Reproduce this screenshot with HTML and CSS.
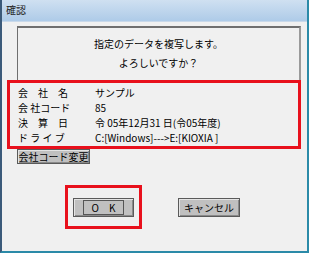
FILE: index.html
```html
<!DOCTYPE html>
<html lang="ja">
<head>
    <meta charset="UTF-8">
    <title>確認</title>
    <link rel="stylesheet" href="styles.css">
</head>
<body>
    <div class="window">
        <div class="titlebar">確認</div>
        <div class="content">
            <div class="message">
                <p>指定のデータを複写します。</p>
                <p>よろしいですか？</p>
            </div>
            <div class="info mark">
                <div class="row"><span class="label">会　社　名</span><span>サンプル</span></div>
                <div class="row"><span class="label">会 社コード</span><span>85</span></div>
                <div class="row"><span class="label">決　算　日</span><span>令 05年12月31 日(令05年度)</span></div>
                <div class="row"><span class="label">ド ラ イ ブ</span><span>C:[Windows]--->E:[KIOXIA ]</span></div>
            </div>
            <button class="btn change">会社コード変更</button>
            <div class="actions">
                <div class="mark ok-wrap">
                    <button class="btn ok"><span>O　K</span></button>
                </div>
                <button class="btn cancel">キャンセル</button>
            </div>
        </div>
    </div>
</body>
</html>
```
FILE: styles.css
```css
body {
    margin: 0;
    font-family: "Noto Sans CJK JP", "Liberation Sans", sans-serif;
    font-size: 10px;
    color: #000;
    background: #f0f0f0;
}
.window {
    width: 309px;
    height: 253px;
    box-sizing: border-box;
    border-left: 2px solid #3b5a7a;
    border-right: 2px solid #2b8aa8;
    border-bottom: 2px solid #2b8aa8;
    background: #f0f0f0;
    display: flex;
    flex-direction: column;
}
.titlebar {
    height: 21px;
    line-height: 20px;
    padding-left: 4px;
    font-size: 10px;
    color: #222;
    background: linear-gradient(#cfe0f1, #aecbe8);
    border-bottom: 1px solid #c9d9ea;
}
.content {
    padding: 4px 0 0 0;
}
.message {
    margin: 0 6px 0 15px;
    height: 56px;
    border-top: 2px solid #6f6f6f;
    border-left: 1px solid #6f6f6f;
    border-right: 2px solid #9a9a9a;
    text-align: center;
    padding-top: 9px;
    box-sizing: border-box;
}
.message p {
    margin: 0 0 6px 0;
    line-height: 13px;
}
.mark {
    border: 3px solid #e8101c;
}
.info {
    margin: -2px 6px 0 5px;
    padding: 2px 0 1px 8px;
}
.row {
    display: flex;
    line-height: 15px;
    white-space: nowrap;
}
.label {
    width: 77px;
}
.btn {
    font-family: inherit;
    font-size: 10px;
    background: #c0c0c0;
    border: 1px solid #5a5a5a;
    box-shadow: inset 1px 1px 0 #e4e4e4, inset -1px -1px 0 #8a8a8a;
    padding: 0;
    color: #000;
    white-space: nowrap;
}
.change {
    margin: 0 0 0 15px;
    width: 73px;
    height: 15px;
    line-height: 13px;
    display: block;
}
.actions {
    display: flex;
    align-items: center;
    margin-top: 21px;
    padding-left: 63px;
}
.ok-wrap {
    width: 71px;
    height: 38px;
    display: flex;
    align-items: center;
    justify-content: center;
}
.ok {
    width: 61px;
    height: 19px;
    display: flex;
    align-items: center;
    justify-content: center;
}
.ok span {
    border: 1px solid #555;
    padding: 0 8px;
    line-height: 13px;
}
.cancel {
    margin-left: 36px;
    width: 62px;
    height: 19px;
}
```
